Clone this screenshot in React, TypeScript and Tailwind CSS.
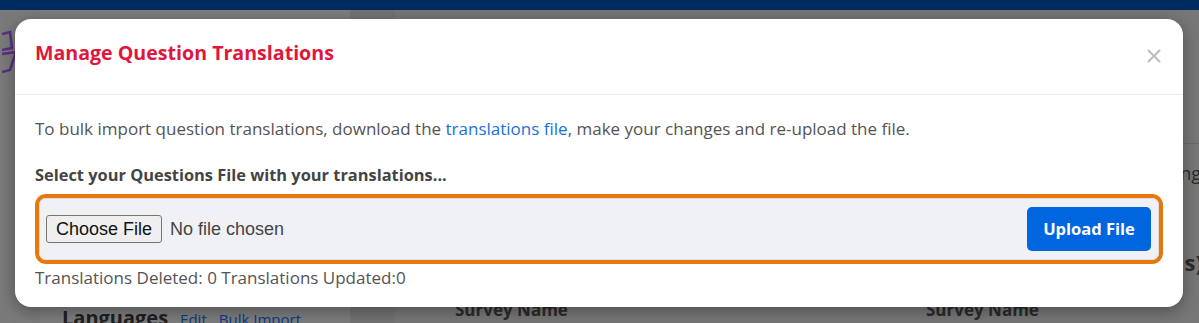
import { X } from "lucide-react";

export default function App() {
  return (
    <div className="relative w-[1199px] h-[323px] overflow-hidden bg-[#767676] font-['Open_Sans',sans-serif]">
      {/* page behind the overlay */}
      <div className="h-[10px] bg-[#002b5e]" />
      <div className="flex h-[313px]">
        <div className="w-[40px] bg-[#7a7a7a] pt-[18px] pl-[2px]">
          <svg width="20" height="48" viewBox="0 0 20 48" fill="none" stroke="#5b2d86" strokeWidth="2.5">
            <path d="M0 6 L8 4 L10 20 L0 22" />
            <path d="M0 26 L14 24 L8 42 L0 44" />
          </svg>
        </div>
        <div className="w-[310px] bg-[#7d7d7d] flex flex-col justify-end pl-[22px]">
          <div className="flex items-baseline gap-3 translate-y-[6px]">
            <span className="text-[20px] font-bold text-[#1f1f1f] leading-[20px]">Languages</span>
            <span className="text-[15px] text-[#0b3b85] leading-[20px]">Edit</span>
            <span className="text-[15px] text-[#0b3b85] leading-[20px]">Bulk Import</span>
          </div>
        </div>
        <div className="w-[45px] bg-[#737373]" />
        <div className="flex-1 bg-[#777777] flex flex-col justify-end">
          <div className="flex pl-[60px] pb-[1px]">
            <span className="w-[471px] text-[17px] font-bold text-[#2a2a2a]">Survey Name</span>
            <span className="text-[17px] font-bold text-[#2a2a2a]">Survey Name</span>
          </div>
        </div>
      </div>
      <div className="absolute right-0 top-[143px] w-[20px] border-t border-[#6a6a6a]" />
      <span className="absolute right-[-2px] top-[160px] text-[18px] text-[#2a2a2a]">ng</span>
      <span className="absolute right-[-4px] top-[246px] text-[22px] font-bold text-[#2a2a2a]">s)</span>

      {/* modal */}
      <div className="absolute left-[15px] top-[19px] w-[1168px] h-[288px] bg-white rounded-[16px] shadow-[0_4px_16px_rgba(0,0,0,0.35)] flex flex-col">
        <div className="flex items-start justify-between h-[76px] pt-[22px] pl-[20px] pr-[18px] border-b border-[#ececec]">
          <h2 className="text-[19.6px] leading-[24px] font-bold text-[#e0163c]">Manage Question Translations</h2>
          <X className="text-[#bdbdbd] mt-[4px]" size={22} strokeWidth={2.2} />
        </div>
        <div className="px-[20px] pt-[23px] flex flex-col">
          <p className="text-[17px] text-[#545454] leading-[22px]">
            To bulk import question translations, download the{" "}
            <a className="text-[#1a6fe0]">translations file</a>, make your changes and re-upload the file.
          </p>
          <p className="mt-[24px] text-[16.4px] font-bold text-[#444444] leading-[22px]">
            Select your Questions File with your translations...
          </p>
          <div className="mt-[8px] rounded-[11px] border-[4px] border-[#e8770c]">
            <div className="flex items-center justify-between bg-[#f0f1f5] rounded-[7px] border border-[#dcdde2] h-[62px] pl-[6px] pr-[7px]">
              <input
                type="file"
                className="text-[18px] text-[#444] font-['Liberation_Sans',sans-serif] file:h-[28px] file:px-[9px] file:mr-[8px] file:bg-[#efefef] file:border file:border-[#767676] file:rounded-[3px] file:text-[#111] file:text-[18px]"
              />
              <button className="h-[44px] w-[124px] rounded-[5px] bg-[#0066e0] text-white text-[16.5px] font-bold">
                Upload File
              </button>
            </div>
          </div>
          <p className="mt-[3px] text-[17px] text-[#545454] leading-[22px]">
            Translations Deleted: 0 Translations Updated:0
          </p>
        </div>
      </div>
    </div>
  );
}
